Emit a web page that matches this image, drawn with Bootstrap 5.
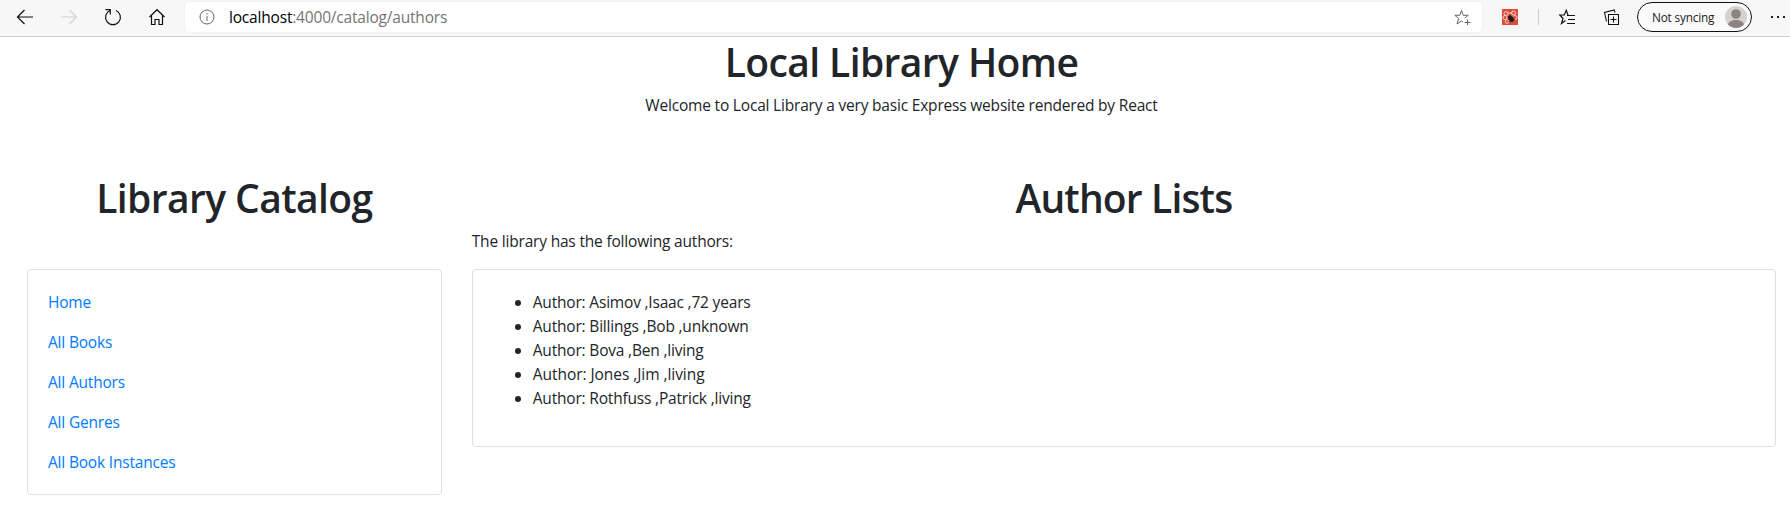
<!DOCTYPE html>
<html lang="en">
<head>
<meta charset="utf-8">
<meta name="viewport" content="width=device-width, initial-scale=1">
<title>Local Library</title>
<link href="https://cdn.jsdelivr.net/npm/bootstrap@5.3.0/dist/css/bootstrap.min.css" rel="stylesheet">
<style>
body{font-family:"Open Sans",sans-serif;color:#212529;font-size:15.5px;line-height:24px;letter-spacing:-.19px;overflow:hidden}
svg{display:block;flex:none;overflow:visible}
.toolbar{height:37px;background:#f7f7f7;border-bottom:1px solid #d0d0d0;padding:2px 0 4px 14px}
.tool{width:22px;margin-right:22px}
.address{width:1297px;height:30px;border-radius:4px;background:#fff;margin-left:-5px;padding:0 12px 0 14px;box-shadow:0 0 2px rgba(0,0,0,.08)}
.url{margin-left:14px;color:#757575}
.extension{margin-left:20px}
.divide{width:1px;height:16px;background:#cfcfcf;margin-left:20px}
.favorites{margin-left:20px}
.collections{margin-left:28px}
.profile{width:115px;height:30px;border:1px solid #111;border-radius:15px;margin-left:17px;padding:0 4px 0 14px;font-size:11.8px;color:#222;background:#fafafa}
.dots{margin-left:18px}
h1{font-size:39px;line-height:48px;font-weight:600;letter-spacing:-.6px;margin:0;padding:1px 0 7px}
p{margin-bottom:16px}
.intro{width:1779px;margin-left:12px}
.columns{margin:0 0 0 12px;padding-top:40px;width:1779px;--bs-gutter-x:30px}
.tight{letter-spacing:-.85px}
.loose{letter-spacing:-.05px}
.panel{border:1px solid #dfdfdf;border-radius:4px;padding:20px}
.panel a{color:#007bff;text-decoration:none}
.panel ul{padding-left:40px;margin-bottom:16px}
.catalog-panel{margin-top:40px}
</style>
</head>
<body>
<header class="toolbar d-flex align-items-center">
<svg class="tool" width="22" height="22" fill="none" stroke="#111" stroke-width="1.2"><path d="M10.5 4 3.5 11l7 7M3.5 11H19"/></svg>
<svg class="tool" width="22" height="22" fill="none" stroke="#d2d2d2" stroke-width="1.2"><path d="m11.5 4 7 7-7 7M18.5 11H3"/></svg>
<svg class="tool" width="22" height="22" fill="none" stroke="#111" stroke-width="1.2"><path d="M14 4.5A7.400 7.400 0 1 1 8 4.500M3.500 3.600H8.300V8.400"/></svg>
<svg class="tool" width="22" height="22" fill="none" stroke="#111" stroke-width="1.2"><path d="m3.500 11 7.500-7.300L18.500 11M5.500 9.500v9h3.500v-5h4v5h3.500v-9"/></svg>
<div class="address d-flex align-items-center">
<svg width="16" height="16" fill="none" stroke="#666"><circle cx="8" cy="8" r="7"/><path d="M8 7v5M8 4v1.500"/></svg>
<span class="url flex-grow-1"><span class="text-black">localhost</span>:4000/catalog/authors</span>
<svg width="16" height="16" fill="none" stroke="#666"><path d="M9 13 7.500 12 3 15l1.700-5.500L.8 6.300h5L7.500 1.300l1.700 5h5L10.700 9M13.500 10.500v5.500M10.500 13.500h6"/></svg>
</div>
<svg class="extension" width="16" height="16"><path fill="#dd4b39" d="M0 0h16v16H0z"/><g fill="none" stroke="#fbd9d4" stroke-width=".9"><circle cx="4" cy="4.500" r="2"/><circle cx="11.500" cy="4" r="2"/><circle cx="3" cy="8.500" r="2"/><circle cx="13" cy="8.500" r="2"/><circle cx="5" cy="12.500" r="1.800"/><path d="M5.500 4h5M6 7h4"/></g><ellipse cx="9" cy="9.500" rx="2.300" ry="3.800" fill="#2a1a18" transform="rotate(-35 9 9.500)"/><path stroke="#2a1a18" d="m6 11 6-3M7 13l6-3"/></svg>
<div class="divide"></div>
<svg class="favorites" width="17" height="16" fill="none" stroke="#111" stroke-width="1.2"><path d="M6.500 11.500 2.500 14.500l1.500-5L.8 6h4.500L7.200 1.300 9 6M8 6.500h8M9 10.500h7M8 14.500h8" /></svg>
<svg class="collections" width="16" height="16" fill="none" stroke="#111" stroke-width="1.1"><path d="M4.500 5.500h10v10h-10zM9.500 7.500v6M6.500 10.500h6M2.500 12.500.5 3.500l9.700-2.500.8 2.500"/></svg>
<div class="profile d-flex align-items-center justify-content-between">Not syncing<svg width="22" height="22"><circle cx="11" cy="11" r="11" fill="#d4d1cf"/><circle cx="11" cy="8" r="4.800" fill="#8a8583"/><path fill="#8a8583" d="M3 18.500c1-6 15-6 16 0a11 11 0 0 1-16 0z"/></svg></div>
<svg class="dots" width="16" height="4" fill="#222"><path d="M1 1h2v2H1zM7 1h2v2H7zM13 1h2v2h-2z"/></svg>
</header>
<section class="intro text-center"><h1>Local Library Home</h1><p>Welcome to Local Library a very basic Express website rendered by React</p></section>
<main class="row columns">
<nav class="col-3"><h1 class="text-center">Library Catalog</h1>
<div class="panel catalog-panel d-flex flex-column gap-3"><a href="#">Home</a><a href="#">All Books</a><a href="#">All Authors</a><a href="#">All Genres</a><a href="#">All Book Instances</a></div></nav>
<section class="col-9"><h1 class="text-center tight">Author Lists</h1><p>The library has the following authors:</p>
<div class="panel"><ul><li>Author: Asimov ,Isaac ,72 years</li><li>Author: Billings ,Bob ,unknown</li><li>Author: Bova ,Ben ,living</li><li class="loose">Author: Jones ,Jim ,living</li><li>Author: Rothfuss ,Patrick ,living</li></ul></div></section>
</main>
</body>
</html>
